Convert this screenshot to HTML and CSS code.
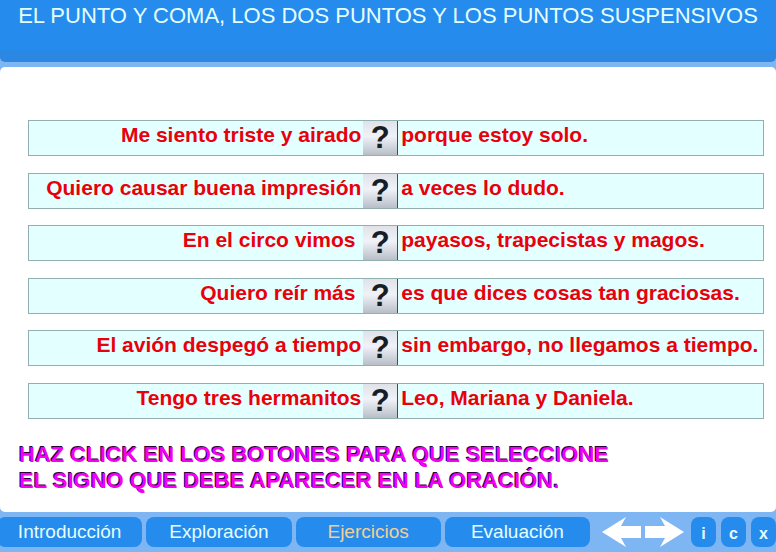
FILE: index.html
```html
<!DOCTYPE html>
<html lang="es">
<head>
<meta charset="utf-8">
<meta name="viewport" content="width=device-width, initial-scale=1">
<title>El punto y coma, los dos puntos y los puntos suspensivos</title>
<link rel="stylesheet" href="styles.css">
</head>
<body>
<header class="header">
  <h1 class="title">EL PUNTO Y COMA, LOS DOS PUNTOS Y LOS PUNTOS SUSPENSIVOS</h1>
</header>
<main class="panel">
  <ul class="sentences">
    <li class="sentence"><span class="before">Me siento triste y airado</span><button class="sign" type="button">?</button><span class="after">porque estoy solo.</span></li>
    <li class="sentence"><span class="before">Quiero causar buena impresión</span><button class="sign" type="button">?</button><span class="after">a veces lo dudo.</span></li>
    <li class="sentence"><span class="before">En el circo vimos&nbsp;</span><button class="sign" type="button">?</button><span class="after">payasos, trapecistas y magos.</span></li>
    <li class="sentence"><span class="before">Quiero reír más&nbsp;</span><button class="sign" type="button">?</button><span class="after">es que dices cosas tan graciosas.</span></li>
    <li class="sentence"><span class="before">El avión despegó a tiempo</span><button class="sign" type="button">?</button><span class="after">sin embargo, no llegamos a tiempo.</span></li>
    <li class="sentence"><span class="before">Tengo tres hermanitos</span><button class="sign" type="button">?</button><span class="after">Leo, Mariana y Daniela.</span></li>
  </ul>
  <p class="instructions">HAZ CLICK EN LOS BOTONES PARA QUE SELECCIONE<br>EL SIGNO QUE DEBE APARECER EN LA ORACIÓN.</p>
</main>
<footer class="footer">
  <nav class="tabs">
    <a class="tab" href="#introduccion">Introducción</a>
    <a class="tab" href="#exploracion">Exploración</a>
    <a class="tab active" href="#ejercicios" aria-current="page">Ejercicios</a>
    <a class="tab" href="#evaluacion">Evaluación</a>
  </nav>
  <div class="arrows">
    <button class="arrow" type="button" aria-label="Anterior"><svg width="39" height="30" viewBox="0 0 39 30"><path d="M0 15 24 0 19 9H39V21H19L24 30Z" fill="#fff"/></svg></button>
    <button class="arrow" type="button" aria-label="Siguiente"><svg width="39" height="30" viewBox="0 0 39 30"><path d="M39 15 15 0 20 9H0V21H20L15 30Z" fill="#fff"/></svg></button>
  </div>
  <div class="tools">
    <button class="tool" type="button">i</button>
    <button class="tool" type="button">c</button>
    <button class="tool" type="button">x</button>
  </div>
</footer>
</body>
</html>
```
FILE: styles.css
```css
* {
  box-sizing: border-box;
}

body {
  margin: 0;
  min-height: 100vh;
  display: flex;
  flex-direction: column;
  gap: 5px;
  background: #7eb6f4;
  font-family: "Liberation Sans", Arial, sans-serif;
}

button {
  margin: 0;
  padding: 0;
  border: 0;
  font-family: inherit;
  cursor: pointer;
}

.header {
  padding: 4px 14px 34px;
  background: linear-gradient(#258bec 50px, #2b87e2 52px);
  border-radius: 0 0 5px 5px;
}

.title {
  margin: 0;
  font-size: 22px;
  line-height: 24px;
  font-weight: 400;
  color: #e4ffff;
  text-align: center;
  white-space: nowrap;
}

.panel {
  flex: 1;
  display: flex;
  flex-direction: column;
  padding: 53px 12px 18px 19px;
  background: #fff;
  border-radius: 5px;
}

.sentences {
  flex: 1;
  display: flex;
  flex-direction: column;
  justify-content: space-between;
  margin: 0 0 23px;
  padding: 0 0 0 9px;
  list-style: none;
}

.sentence {
  display: grid;
  grid-template-columns: 11fr 35px 12fr;
  height: 36px;
  border: 1px solid #93b0b0;
  background: #e4ffff;
  color: #e8000a;
  font-size: 21px;
  line-height: 28px;
  font-weight: 700;
  white-space: nowrap;
}

.before {
  padding-right: 2px;
  text-align: right;
}

.after {
  padding-left: 3px;
}

.sign {
  border-right: 1px solid #444c58;
  background: linear-gradient(#dfe2e8, #f0f2f8 45%, #b8bec8);
  color: #171c26;
  font-size: 31px;
  line-height: 34px;
  font-weight: 700;
}

.instructions {
  margin: 0;
  font-size: 22px;
  line-height: 26px;
  font-weight: 700;
  color: #f400f4;
  text-shadow: -1px -1px 0 #30003c;
}

.footer {
  display: flex;
  align-items: center;
  padding-bottom: 5px;
}

.tabs {
  flex: 1;
  display: grid;
  grid-template-columns: repeat(4, 1fr);
  gap: 4px;
  margin-left: -3px;
}

.tab {
  height: 30px;
  border-radius: 8px;
  background: #258bec;
  color: #e4ffff;
  font-size: 19px;
  line-height: 30px;
  text-align: center;
  text-decoration: none;
}

.active {
  color: #f4cf94;
}

.arrows {
  display: flex;
  gap: 4px;
  margin: 0 7px 0 12px;
}

.arrow {
  height: 30px;
  background: none;
}

.arrow svg {
  display: block;
}

.tools {
  display: flex;
  gap: 5px;
}

.tool {
  width: 25px;
  height: 30px;
  padding-top: 3px;
  border-radius: 8px;
  background: #258bec;
  color: #e4ffff;
  font-size: 16px;
  font-weight: 700;
}
```
